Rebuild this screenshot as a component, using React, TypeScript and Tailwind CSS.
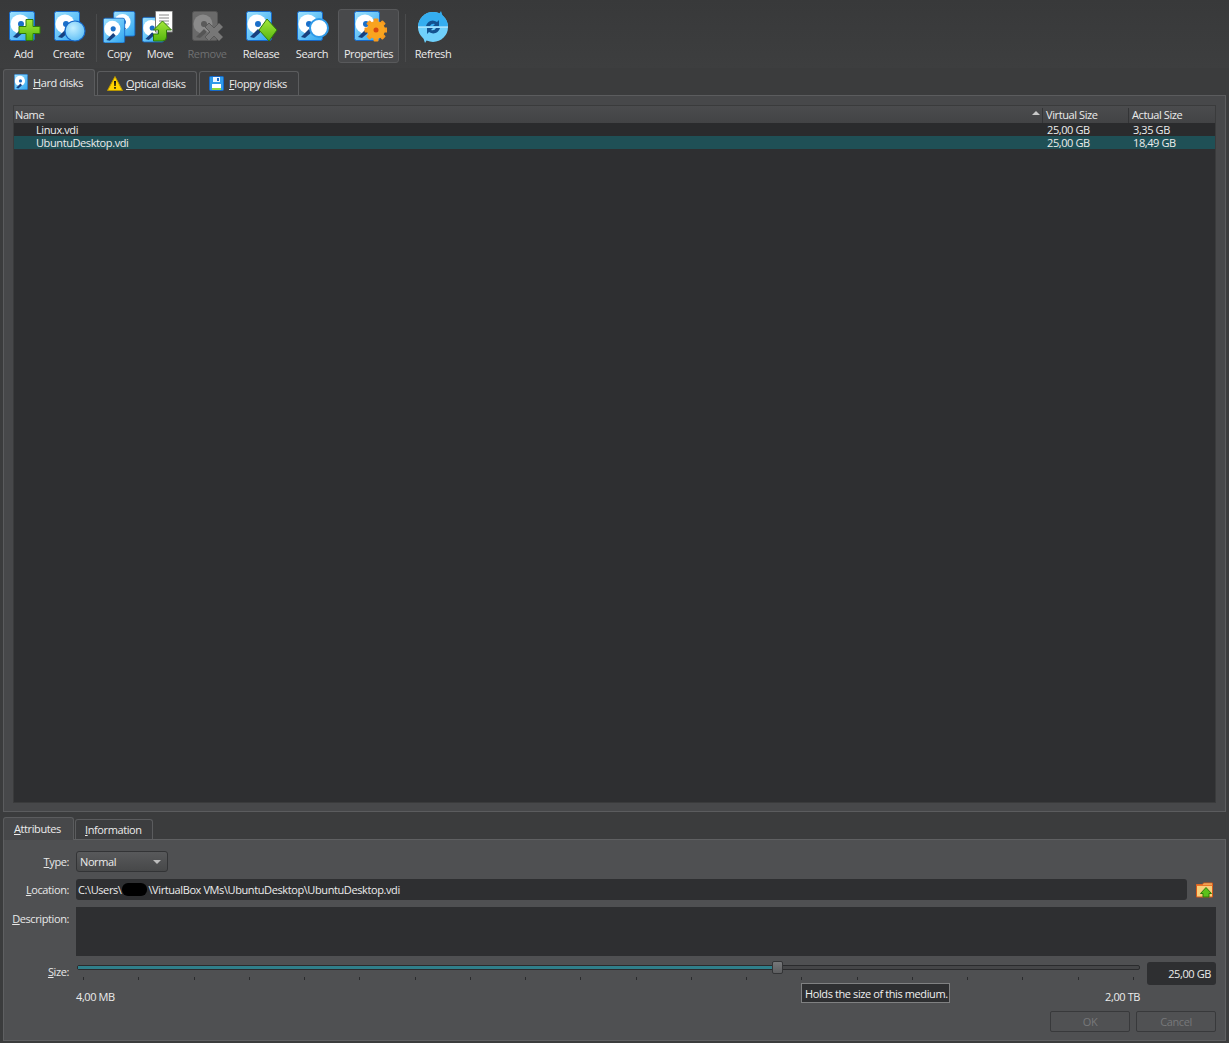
import type { ReactNode } from 'react';

const Hdd = ({ x = 0, y = 0, gray = false }: { x?: number; y?: number; gray?: boolean }) => (
  <g transform={`translate(${x} ${y})`}>
    <rect x="0.5" y="0.5" width="25" height="29" rx="2" fill={gray ? '#6a6a6a' : 'url(#hddBlue)'} stroke={gray ? '#555' : '#1668c8'} />
    <circle cx="11" cy="13" r="9.5" fill={gray ? '#8a8a8a' : '#fff'} />
    <circle cx="12" cy="13" r="3" fill={gray ? '#5a5a5a' : '#1a6fc9'} />
    <path d="M4 26l8-8 3 3-7 6z" fill={gray ? '#555' : '#17407f'} />
  </g>
);

const Defs = () => (
  <defs>
    <linearGradient id="hddBlue" x1="0" y1="0" x2="1" y2="1">
      <stop offset="0" stopColor="#9fe2ff" />
      <stop offset="1" stopColor="#2fa6f0" />
    </linearGradient>
    <linearGradient id="green" x1="0" y1="0" x2="0" y2="1">
      <stop offset="0" stopColor="#a4e83a" />
      <stop offset="1" stopColor="#55b50e" />
    </linearGradient>
    <radialGradient id="orb" cx="0.4" cy="0.35" r="0.8">
      <stop offset="0" stopColor="#c4efff" />
      <stop offset="1" stopColor="#4fb8f5" />
    </radialGradient>
  </defs>
);

const Svg = ({ children }: { children: ReactNode }) => (
  <svg width="36" height="32" viewBox="0 0 36 32" className="block">
    {children}
  </svg>
);

const AddIcon = () => (
  <Svg>
    <Hdd x={3} y={0} />
    <path d="M21 8.5h7v7h7v7h-7v7h-7v-7h-7v-7h7z" transform="translate(-1 0)" fill="url(#green)" stroke="#2f7a0a" />
  </Svg>
);
const CreateIcon = () => (
  <Svg>
    <Hdd x={3} y={0} />
    <circle cx="24" cy="20" r="10" fill="url(#orb)" stroke="#1668c8" strokeWidth="1.2" />
  </Svg>
);
const CopyIcon = () => (
  <Svg>
    <g transform="translate(2 0) scale(0.85)">
      <Hdd x={12} y={0} />
      <Hdd x={0} y={8} />
    </g>
  </Svg>
);
const MoveIcon = () => (
  <Svg>
    <g transform="translate(0 0) scale(0.85)">
      <Hdd x={0} y={7} />
    </g>
    <path d="M13.5 0h17v21h-17z" fill="#fff" stroke="#777" />
    <path d="M17 4h10M17 7h10M17 10h10M17 13h10" stroke="#888" />
    <path d="M20.500 10l9 9h-5v7q0 4-4 4h-9v-7h5v-4h-5z" fill="url(#green)" stroke="#2f7a0a" />
  </Svg>
);
const RemoveIcon = () => (
  <Svg>
    <Hdd x={3} y={0} gray />
    <path d="M16 16l4-4 5 5 5-5 4 4-5 5 5 5-4 4-5-5-5 5-4-4 5-5z" fill="#777" stroke="#585858" />
  </Svg>
);
const ReleaseIcon = () => (
  <Svg>
    <Hdd x={3} y={0} />
    <path d="M26 9l10 11-8 11-10-11z" transform="translate(-2 -1)" fill="url(#green)" stroke="#2f7a0a" />
  </Svg>
);
const SearchIcon = () => (
  <Svg>
    <Hdd x={3} y={0} />
    <circle cx="25" cy="17" r="9" fill="#fff" stroke="#2f9ae8" strokeWidth="2" />
  </Svg>
);
const PropertiesIcon = () => {
  const teeth = [0, 45, 90, 135, 180, 225, 270, 315];
  return (
    <Svg>
      <Hdd x={3} y={0} />
      <g transform="translate(25 19)">
        {teeth.map(a => (
          <rect key={a} x="-2.500" y="-11.500" width="5" height="6" rx="1" fill="#f79a1e" transform={`rotate(${a})`} />
        ))}
        <circle r="9" fill="#f9a41f" />
        <circle r="2.500" fill="#d8480f" />
      </g>
    </Svg>
  );
};
const RefreshIcon = () => (
  <svg width="34" height="32" viewBox="0 0 34 32" className="block">
    <circle cx="17" cy="16" r="15" fill="#6fd0fb" />
    <path d="M17 1a15 15 0 0 0-15 15h30a15 15 0 0 0-15-15z" fill="#35aef0" />
    <path d="M25 0l3 9-8-1z" fill="#35aef0" />
    <path d="M9 32l-3-9 8 1z" fill="#6fd0fb" />
    <path d="M2 16h30" stroke="#d8f4ff" />
    <path d="M10 15a7 7 0 0 1 11-4l2-2v6h-6l2-2a4 4 0 0 0-5 2z" fill="#13518f" />
    <path d="M24 17a7 7 0 0 1-11 4l-2 2v-6h6l-2 2a4 4 0 0 0 5-2z" fill="#13518f" />
  </svg>
);

const SmallHdd = () => (
  <svg width="14" height="16" viewBox="0 0 26 30" className="block">
    <Hdd />
  </svg>
);
const Warn = () => (
  <svg width="16" height="15" viewBox="0 0 16 15" className="-mr-[2px] block">
    <path d="M8 .5l7.500 14H.5z" fill="#ffd400" stroke="#b89600" />
    <path d="M7 5h2l-.3 5H7.300zM7.200 11h1.600v1.800H7.200z" fill="#111" />
  </svg>
);
const Floppy = () => (
  <svg width="15" height="15" viewBox="0 0 15 15" className="block">
    <rect x=".5" y=".5" width="14" height="14" rx="1" fill="#2f9ae8" stroke="#1668c8" />
    <rect x="4" y="1" width="7" height="5" fill="#eaf6ff" />
    <rect x="8" y="2" width="2" height="3" fill="#1668c8" />
    <rect x="3" y="8" width="9" height="6" fill="#fff" />
    <rect x="3" y="12" width="9" height="2" fill="#8fd93a" />
  </svg>
);
const FolderUp = () => (
  <svg width="17" height="16" viewBox="0 0 17 16" className="block">
    <path d="M.5 2.500h6l1-1.500h9v14H.5z" fill="#f7cf7a" stroke="#d4581a" />
    <path d="M.5 2.500h16v1.500H.5z" fill="#e9742a" />
    <path d="M10 5.500l5.500 6h-2.500v3.500H7V11.500H4.500z" fill="#5cc21a" stroke="#2f7a0a" />
  </svg>
);

const tools = [
  { label: 'Add', icon: <AddIcon />, w: 'w-[41px]' },
  { label: 'Create', icon: <CreateIcon />, w: 'w-[49px]' },
  { sep: 'ml-[3px] mr-[2px]' },
  { label: 'Copy', icon: <CopyIcon />, w: 'w-[40px]' },
  { label: 'Move', icon: <MoveIcon />, w: 'w-[42px]' },
  { label: 'Remove', icon: <RemoveIcon />, w: 'w-[52px]', off: true },
  { label: 'Release', icon: <ReleaseIcon />, w: 'w-[56px]' },
  { label: 'Search', icon: <SearchIcon />, w: 'w-[46px] mr-[3px]' },
  { label: 'Properties', icon: <PropertiesIcon />, w: 'w-[61px]', on: true },
  { sep: 'ml-[6px] mr-[2px]' },
  { label: 'Refresh', icon: <RefreshIcon />, w: 'w-[50px]' },
];

const ticks = Array.from({ length: 20 }, (_, i) => i);

function Tab({ active, icon, w, h, children }: { active?: boolean; icon?: ReactNode; w: string; h?: string; children: ReactNode }) {
  return (
    <div
      className={`${w} flex items-center gap-[5px] rounded-t-[3px] border border-[#5b5c5e] border-b-0 ${
        active ? 'relative z-10 -mb-px bg-[#47484a] pl-[10px] pb-[2px]' : 'bg-[#3c3d3f] pl-[9px]'
      } ${h ?? (active ? 'h-[27px]' : 'h-[24px]')}`}
    >
      {icon}
      <span>{children}</span>
    </div>
  );
}

const Field = ({ label, mnemonic, children, className }: { label: string; mnemonic: string; children: ReactNode; className?: string }) => (
  <div className={`flex ${className ?? ''}`}>
    <div className="w-[63px] shrink-0 text-right text-[#e8e8e8]">
      <u>{mnemonic}</u>
      {label}:
    </div>
    <div className="ml-[7px] flex-1">{children}</div>
  </div>
);

export default function App() {
  return (
    <div className="flex h-[1043px] w-[1229px] flex-col overflow-hidden bg-[#3b3c3d] font-['Open_Sans','Noto_Sans',sans-serif] text-[11px] leading-[13px] tracking-[-0.4px] text-[#ececec]">
      <svg width="0" height="0" className="absolute">
        <Defs />
      </svg>

      <div className="flex h-[68px] shrink-0 items-start bg-gradient-to-b from-[#38393a] to-[#3d3e3f] pl-[3px] pt-[9px]">
        {tools.map((t, i) =>
          t.sep ? (
            <div key={i} className={`${t.sep} mt-[5px] h-[48px] w-px bg-[#4a4b4c]`} />
          ) : (
            <div
              key={t.label}
              className={`${t.w} flex h-[54px] flex-col items-center rounded-[3px] border pt-[1px] ${
                t.on ? 'border-[#58595b] bg-[#48494b]' : 'border-transparent'
              } ${t.off ? 'text-[#6f7071]' : ''}`}
            >
              {t.icon}
              <span className="mt-[4px] whitespace-nowrap">{t.label}</span>
            </div>
          ),
        )}
      </div>

      <div className="flex h-[27px] shrink-0 items-end gap-[2px] pl-[3px]">
        <Tab active w="w-[92px]" icon={<SmallHdd />}>
          <u>H</u>ard disks
        </Tab>
        <Tab w="w-[100px]" icon={<Warn />}>
          <u>O</u>ptical disks
        </Tab>
        <Tab w="w-[100px]" icon={<Floppy />}>
          <u>F</u>loppy disks
        </Tab>
      </div>

      <div className="mx-[3px] flex h-[717px] shrink-0 flex-col border border-[#5b5c5e] bg-[#47484a] px-[9px] pb-[8px] pt-[9px]">
        <div className="flex flex-1 flex-col border border-[#3a3b3c] bg-[#2e2f31]">
          <div className="flex h-[17px] bg-gradient-to-b from-[#4b4c4e] to-[#424345] pt-[2px]">
            <div className="relative flex-1 border-r border-[#333436] pl-[1px]">
              Name
              <span className="absolute right-[2px] top-[3px] h-0 w-0 border-x-[4px] border-b-[4px] border-x-transparent border-b-[#c9c9c9]" />
            </div>
            <div className="w-[86px] border-r border-[#333436] pl-[3px]">Virtual Size</div>
            <div className="w-[86px] pl-[3px]">Actual Size</div>
          </div>
          {[
            ['Linux.vdi', '25,00 GB', '3,35 GB'],
            ['UbuntuDesktop.vdi', '25,00 GB', '18,49 GB'],
          ].map((r, i) => (
            <div key={r[0]} className={`flex h-[13px] items-center ${i === 1 ? 'bg-[#1f5056]' : 'bg-[#2a2b2d]'}`}>
              <div className="flex-1 pl-[22px]">{r[0]}</div>
              <div className="w-[86px] pl-[4px]">{r[1]}</div>
              <div className="w-[86px] pl-[4px]">{r[2]}</div>
            </div>
          ))}
        </div>
      </div>

      <div className="mt-[4px] flex h-[23px] shrink-0 items-end gap-[1px] pl-[3px]">
        <Tab active w="w-[71px]" h="h-[23px]">
          <u>A</u>ttributes
        </Tab>
        <Tab w="w-[78px]" h="h-[20px]">
          <u>I</u>nformation
        </Tab>
      </div>

      <div className="relative mx-[3px] flex h-[202px] shrink-0 flex-col border border-[#5f6062] bg-[#4f5052] pl-[2px] pr-[9px] pt-[11px]">
        <Field mnemonic="T" label="ype" className="h-[21px] items-center">
          <div className="flex h-[21px] w-[92px] items-center justify-between rounded-[3px] border border-[#333436] bg-gradient-to-b from-[#58595b] to-[#474849] pl-[3px] pr-[6px]">
            Normal
            <span className="h-0 w-0 border-x-[4px] border-t-[4px] border-x-transparent border-t-[#bdbdbd]" />
          </div>
        </Field>
        <Field mnemonic="L" label="ocation" className="mt-[7px] h-[21px] items-center">
          <div className="flex items-center">
            <div className="flex h-[21px] flex-1 items-center rounded-[3px] bg-[#2e2f31] pl-[2px]">
              C:\Users\
              <span className="mx-[1px] h-[13px] w-[25px] rounded-[6px] bg-black" />
              \VirtualBox VMs\UbuntuDesktop\UbuntuDesktop.vdi
            </div>
            <div className="ml-[9px] mr-[3px] w-[17px]">
              <FolderUp />
            </div>
          </div>
        </Field>
        <Field mnemonic="D" label="escription" className="mt-[7px] h-[49px] pt-[5px]">
          <div className="-mt-[5px] h-[49px] bg-[#2e2f31]" />
        </Field>
        <Field mnemonic="S" label="ize" className="mt-[6px] h-[23px] pt-[3px]">
          <div className="-mt-[3px] flex items-start">
            <div className="flex-1 pl-[1px]">
              <div className="flex h-[11px] items-center">
                <div className="relative h-[5px] w-full rounded-[2px] border border-[#2a2b2d] bg-[#454648]">
                  <div className="h-full w-[65.500%] bg-[#2f7f8a]" />
                  <div className="absolute left-[65.400%] top-[-5px] h-[13px] w-[11px] rounded-[2px] border border-[#333436] bg-gradient-to-b from-[#77787a] to-[#5c5d5f]" />
                </div>
              </div>
              <div className="mt-[4px] flex justify-between pl-[6px] pr-[6px]">
                {ticks.map(i => (
                  <span key={i} className="h-[3px] w-px bg-[#2a2b2d]" />
                ))}
              </div>
            </div>
            <div className="ml-[7px] flex h-[23px] w-[69px] items-center justify-end rounded-[3px] bg-[#2e2f31] pr-[5px]">25,00 GB</div>
          </div>
        </Field>
        <div className="ml-[70px] mr-[76px] mt-[5px] flex justify-between">
          <span>4,00 MB</span>
          <span>2,00 TB</span>
        </div>
        <div className="mt-[8px] flex justify-end gap-[6px] text-[#77787a]">
          <div className="flex h-[21px] w-[80px] items-center justify-center rounded-[2px] border border-[#38393b] bg-[#505153]">OK</div>
          <div className="flex h-[21px] w-[80px] items-center justify-center rounded-[2px] border border-[#38393b] bg-[#505153]">Cancel</div>
        </div>
        <div className="absolute left-[797px] top-[143px] flex h-[20px] w-[149px] items-center whitespace-nowrap border border-[#808182] bg-[#2e2f31] pl-[3px] text-[#f0f0f0]">
          Holds the size of this medium.
        </div>
      </div>
    </div>
  );
}
